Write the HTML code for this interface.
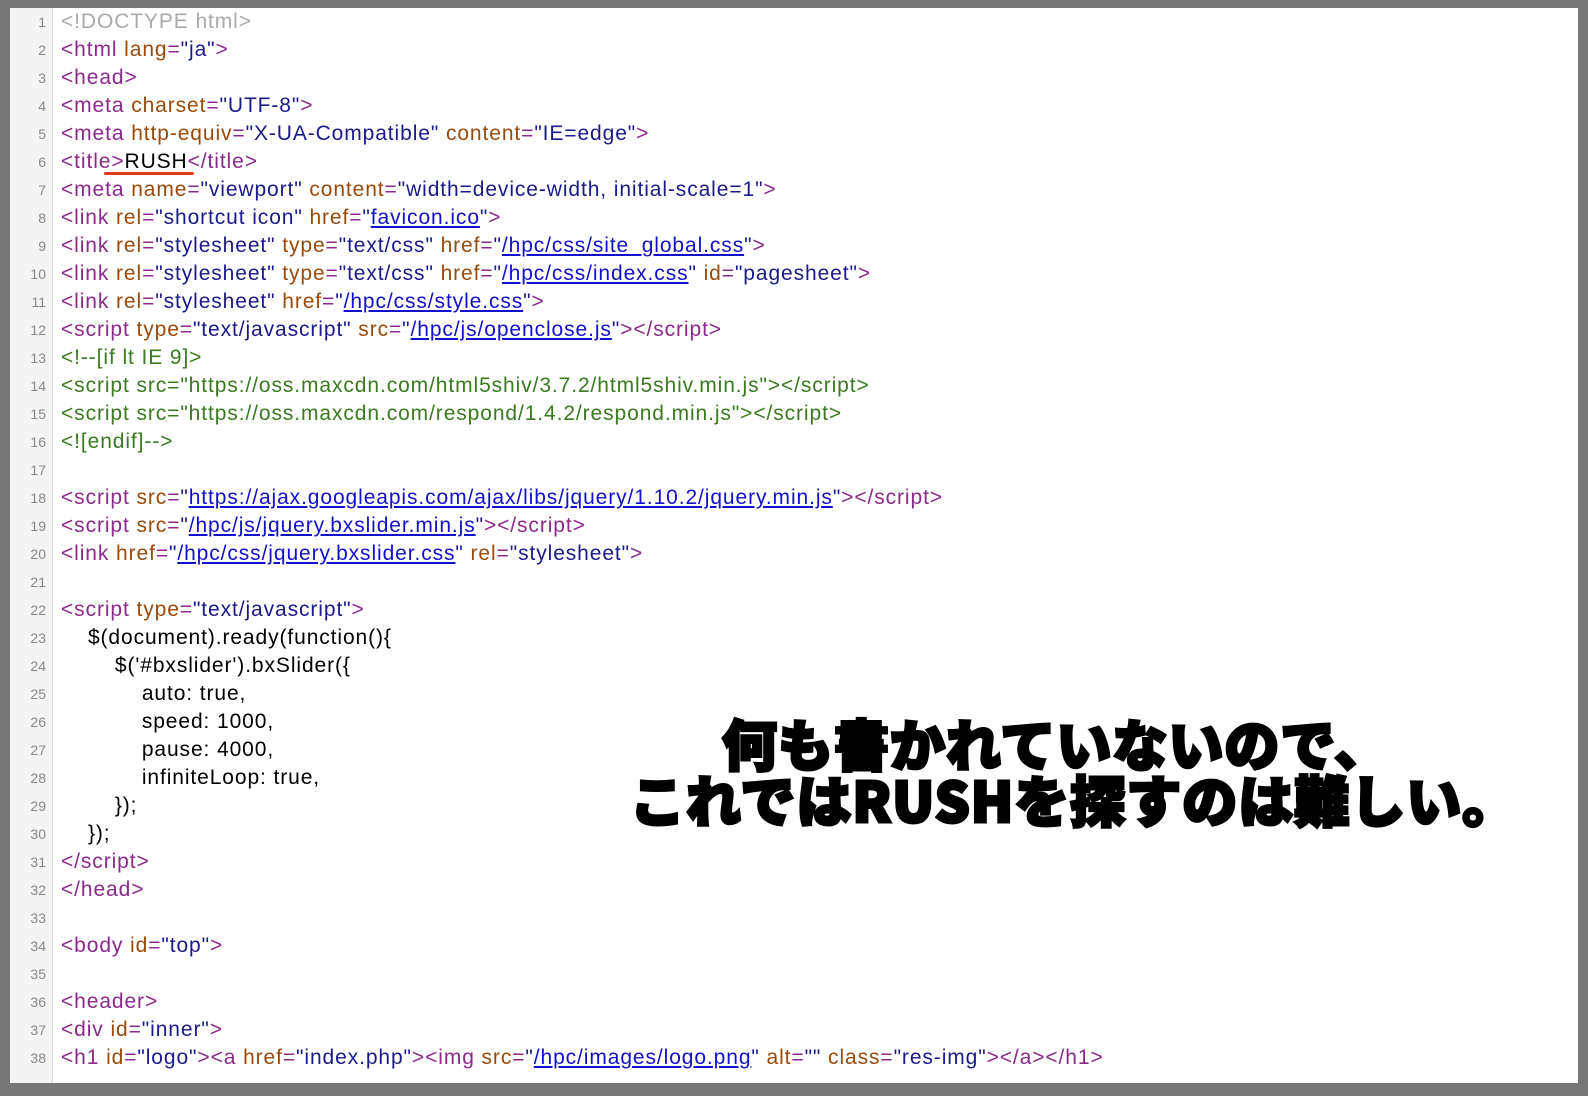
<!DOCTYPE html>
<html><head><meta charset="utf-8"><style>
body{margin:0;width:1588px;height:1096px;background:#777;position:relative;overflow:hidden;font-family:"Liberation Sans","Noto Sans CJK JP",sans-serif}
.page{position:absolute;left:10px;top:8px;width:1568px;height:1075px;background:#fff}
.gut{position:absolute;left:0;top:0;width:42px;height:100%;background:#f4f4f4;border-right:1px solid #ddd}
.ln{position:absolute;left:0;width:36px;text-align:right;font-size:14px;color:#888;line-height:28px}
.code{position:absolute;left:51px;font-size:21px;line-height:28px;white-space:pre;color:#000;letter-spacing:0.9px}
.t{color:#8b2a8b}.a{color:#9a4a0a}.v{color:#1a1a8a}.c{color:#3a7a20}.u{color:#1111cc;text-decoration:underline}.g{color:#aaa}
.big{position:absolute;font-family:"Noto Sans CJK JP",sans-serif;font-weight:900;font-size:55px;color:#000;-webkit-text-stroke:3px #000;white-space:nowrap;letter-spacing:1px;line-height:56px}
</style></head><body><div class="page">
<div class="gut"></div>
<div id="nums"></div>
<div class="code" style="top:0"><span class="g">&lt;!DOCTYPE html&gt;</span>
<span class="t">&lt;html </span><span class="a">lang</span><span class="t">=</span><span class="v">"ja"</span><span class="t">&gt;</span>
<span class="t">&lt;head&gt;</span>
<span class="t">&lt;meta </span><span class="a">charset</span><span class="t">=</span><span class="v">"UTF-8"</span><span class="t">&gt;</span>
<span class="t">&lt;meta </span><span class="a">http-equiv</span><span class="t">=</span><span class="v">"X-UA-Compatible"</span> <span class="a">content</span><span class="t">=</span><span class="v">"IE=edge"</span><span class="t">&gt;</span>
<span class="t">&lt;title&gt;</span>RUSH<span class="t">&lt;/title&gt;</span>
<span class="t">&lt;meta </span><span class="a">name</span><span class="t">=</span><span class="v">"viewport"</span> <span class="a">content</span><span class="t">=</span><span class="v">"width=device-width, initial-scale=1"</span><span class="t">&gt;</span>
<span class="t">&lt;link </span><span class="a">rel</span><span class="t">=</span><span class="v">"shortcut icon"</span> <span class="a">href</span><span class="t">=</span><span class="v">"</span><span class="u">favicon.ico</span><span class="v">"</span><span class="t">&gt;</span>
<span class="t">&lt;link </span><span class="a">rel</span><span class="t">=</span><span class="v">"stylesheet"</span> <span class="a">type</span><span class="t">=</span><span class="v">"text/css"</span> <span class="a">href</span><span class="t">=</span><span class="v">"</span><span class="u">/hpc/css/site_global.css</span><span class="v">"</span><span class="t">&gt;</span>
<span class="t">&lt;link </span><span class="a">rel</span><span class="t">=</span><span class="v">"stylesheet"</span> <span class="a">type</span><span class="t">=</span><span class="v">"text/css"</span> <span class="a">href</span><span class="t">=</span><span class="v">"</span><span class="u">/hpc/css/index.css</span><span class="v">"</span> <span class="a">id</span><span class="t">=</span><span class="v">"pagesheet"</span><span class="t">&gt;</span>
<span class="t">&lt;link </span><span class="a">rel</span><span class="t">=</span><span class="v">"stylesheet"</span> <span class="a">href</span><span class="t">=</span><span class="v">"</span><span class="u">/hpc/css/style.css</span><span class="v">"</span><span class="t">&gt;</span>
<span class="t">&lt;script </span><span class="a">type</span><span class="t">=</span><span class="v">"text/javascript"</span> <span class="a">src</span><span class="t">=</span><span class="v">"</span><span class="u">/hpc/js/openclose.js</span><span class="v">"</span><span class="t">&gt;&lt;/script&gt;</span>
<span class="c">&lt;!--[if lt IE 9]&gt;</span>
<span class="c">&lt;script src="https://oss.maxcdn.com/html5shiv/3.7.2/html5shiv.min.js"&gt;&lt;/script&gt;</span>
<span class="c">&lt;script src="https://oss.maxcdn.com/respond/1.4.2/respond.min.js"&gt;&lt;/script&gt;</span>
<span class="c">&lt;![endif]--&gt;</span>

<span class="t">&lt;script </span><span class="a">src</span><span class="t">=</span><span class="v">"</span><span class="u">https://ajax.googleapis.com/ajax/libs/jquery/1.10.2/jquery.min.js</span><span class="v">"</span><span class="t">&gt;&lt;/script&gt;</span>
<span class="t">&lt;script </span><span class="a">src</span><span class="t">=</span><span class="v">"</span><span class="u">/hpc/js/jquery.bxslider.min.js</span><span class="v">"</span><span class="t">&gt;&lt;/script&gt;</span>
<span class="t">&lt;link </span><span class="a">href</span><span class="t">=</span><span class="v">"</span><span class="u">/hpc/css/jquery.bxslider.css</span><span class="v">"</span> <span class="a">rel</span><span class="t">=</span><span class="v">"stylesheet"</span><span class="t">&gt;</span>

<span class="t">&lt;script </span><span class="a">type</span><span class="t">=</span><span class="v">"text/javascript"</span><span class="t">&gt;</span>
    $(document).ready(function(){
        $('#bxslider').bxSlider({
            auto: true,
            speed: 1000,
            pause: 4000,
            infiniteLoop: true,
        });
    });
<span class="t">&lt;/script&gt;</span>
<span class="t">&lt;/head&gt;</span>

<span class="t">&lt;body </span><span class="a">id</span><span class="t">=</span><span class="v">"top"</span><span class="t">&gt;</span>

<span class="t">&lt;header&gt;</span>
<span class="t">&lt;div </span><span class="a">id</span><span class="t">=</span><span class="v">"inner"</span><span class="t">&gt;</span>
<span class="t">&lt;h1 </span><span class="a">id</span><span class="t">=</span><span class="v">"logo"</span><span class="t">&gt;&lt;a </span><span class="a">href</span><span class="t">=</span><span class="v">"index.php"</span><span class="t">&gt;&lt;img </span><span class="a">src</span><span class="t">=</span><span class="v">"</span><span class="u">/hpc/images/logo.png</span><span class="v">"</span> <span class="a">alt</span><span class="t">=</span><span class="v">""</span> <span class="a">class</span><span class="t">=</span><span class="v">"res-img"</span><span class="t">&gt;&lt;/a&gt;&lt;/h1&gt;</span></div>
<div style="position:absolute;left:94px;top:164px;width:90px;height:3px;background:#e03a1a;border-radius:2px"></div>
<div class="big" style="left:712px;top:706px">何も書かれていないので、</div>
<div class="big" style="left:620px;top:762px">これではRUSHを探すのは難しい。</div>
</div>
<script>
var h='';for(var i=1;i<=38;i++){h+='<div class="ln" style="top:'+((i-1)*28)+'px">'+i+'</div>';}
document.getElementById('nums').innerHTML=h;
</script>
</body></html>
